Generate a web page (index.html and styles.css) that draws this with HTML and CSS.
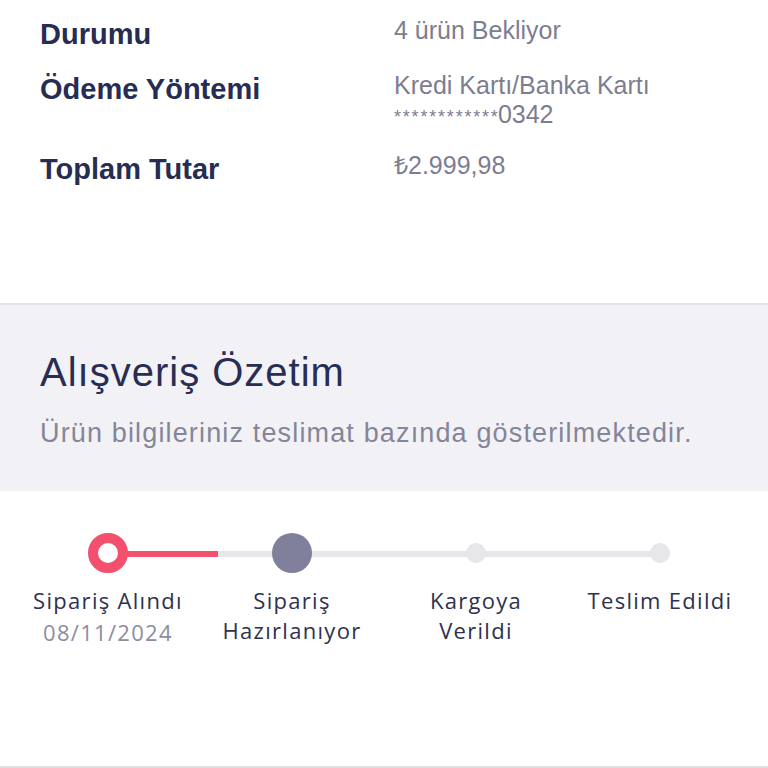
FILE: index.html
```html
<!DOCTYPE html>
<html lang="tr">
<head>
<meta charset="utf-8">
<link rel="stylesheet" href="styles.css">
</head>
<body>
<div class="page">
  <section class="details">
    <div class="label">Durumu</div>
    <div class="value">4 ürün Bekliyor</div>
    <div class="label">Ödeme Yöntemi</div>
    <div class="value">Kredi Kartı/Banka Kartı<br><span class="mask">************</span>0342</div>
    <div class="label">Toplam Tutar</div>
    <div class="value">₺2.999,98</div>
  </section>
  <section class="summary">
    <h2 class="summary-title">Alışveriş Özetim</h2>
    <p class="summary-sub">Ürün bilgileriniz teslimat bazında gösterilmektedir.</p>
  </section>
  <section class="stepper">
    <div class="track"></div>
    <div class="marker m1"><span class="ring"></span></div>
    <div class="marker m2"><span class="dot-big"></span></div>
    <div class="marker m3"><span class="dot-small"></span></div>
    <div class="marker m4"><span class="dot-small"></span></div>
    <div class="step-label s1">Sipariş Alındı<span class="date">08/11/2024</span></div>
    <div class="step-label s2">Sipariş<br>Hazırlanıyor</div>
    <div class="step-label s3">Kargoya<br>Verildi</div>
    <div class="step-label s4">Teslim Edildi</div>
  </section>
  <div class="spacer"></div>
</div>
</body>
</html>
```
FILE: styles.css
```css
* { box-sizing: border-box; }
html, body { margin: 0; padding: 0; background: #ffffff; }
body { width: 768px; height: 768px; overflow: hidden; font-family: "Liberation Sans", Arial, sans-serif; }
.page { display: flex; flex-direction: column; height: 768px; }

.details {
  display: grid;
  grid-template-columns: 354px 1fr;
  row-gap: 19px;
  padding: 16px 0 0 40px;
  height: 303px;
  align-items: start;
  align-content: start;
}
.label {
  font-size: 29px;
  line-height: 36px;
  font-weight: 700;
  color: #272c52;
}
.value {
  font-size: 25px;
  line-height: 29px;
  color: #7d7d92;
}
.mask { font-size: 18px; letter-spacing: 1.8px; margin-right: -1.8px; }

.summary {
  background: #f2f2f6;
  border-top: 2px solid #e3e3e8;
  padding: 43px 40px 41px;
  height: 188px;
}
.summary-title {
  margin: 0;
  font-size: 40px;
  line-height: 48px;
  font-weight: 400;
  letter-spacing: 1px;
  color: #282d54;
}
.summary-sub {
  margin: 21px 0 0;
  font-size: 27px;
  line-height: 32px;
  letter-spacing: 1.15px;
  color: #85859a;
}

.stepper {
  display: grid;
  grid-template-columns: repeat(4, 184px);
  grid-template-rows: 40px auto;
  padding: 42px 16px 0;
  font-family: "Open Sans", sans-serif;
}
.track {
  grid-row: 1;
  grid-column: 1 / 5;
  align-self: center;
  margin: 1px 92px 0;
  height: 6px;
  border-radius: 3px;
  background: linear-gradient(to right, #f2506e 0 110px, #e6e6eb 110px);
}
.marker {
  grid-row: 1;
  display: flex;
  align-items: center;
  justify-content: center;
}
.m1 { grid-column: 1; }
.m2 { grid-column: 2; }
.m3 { grid-column: 3; }
.m4 { grid-column: 4; }
.ring {
  width: 40px; height: 40px;
  border-radius: 50%;
  border: 10px solid #f2506e;
  background: #ffffff;
}
.dot-big {
  width: 40px; height: 40px;
  border-radius: 50%;
  background: #80809c;
}
.dot-small {
  width: 20px; height: 20px;
  border-radius: 50%;
  background: #e6e6eb;
}
.step-label {
  grid-row: 2;
  text-align: center;
  font-size: 22px;
  line-height: 30px;
  color: #2e3150;
  padding-top: 12px;
  letter-spacing: 1.3px;
  white-space: nowrap;
}
.s1 { grid-column: 1; }
.s2 { grid-column: 2; }
.s3 { grid-column: 3; }
.s4 { grid-column: 4; }
.date { display: block; color: #8d8d9d; margin-top: 2px; }

.spacer { flex: 1; border-bottom: 2px solid #dedee2; }
```
